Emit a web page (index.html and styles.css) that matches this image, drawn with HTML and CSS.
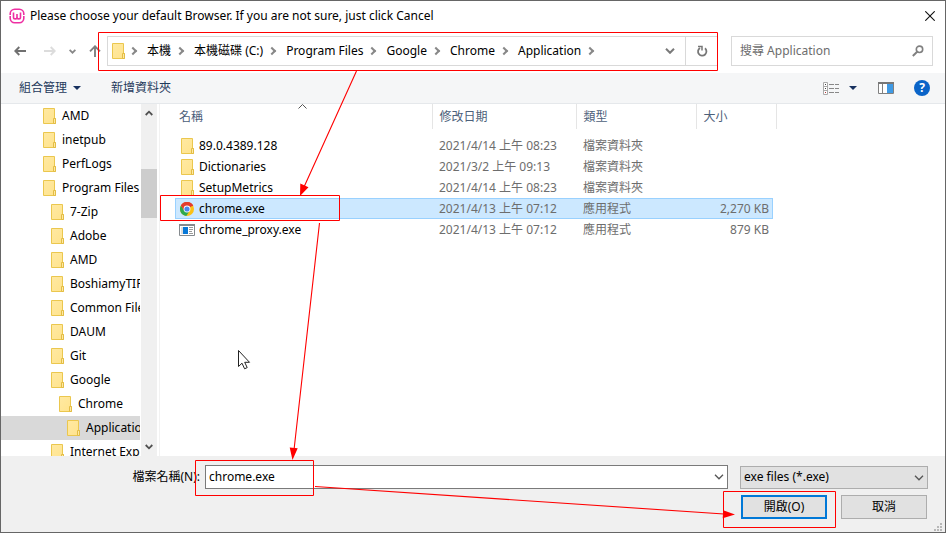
FILE: index.html
```html
<!DOCTYPE html>
<html lang="zh-Hant">
<head>
<meta charset="utf-8">
<title>Please choose your default Browser</title>
<link rel="stylesheet" href="styles.css">
</head>
<body>
<svg class="defs" aria-hidden="true">
  <defs>
    <linearGradient id="paper" x1="0" y1="0" x2="1" y2="1"><stop offset="0" stop-color="#ffe9a2"/><stop offset="1" stop-color="#ffe38c"/></linearGradient>
    <symbol id="folder" viewBox="0 0 14 16"><path d="M.5.5h11v10h1v5H.5z" fill="url(#paper)" stroke="#ebc74e"/><path d="M10.500 15.500v-5h2v5z" fill="#ffe9a2" stroke="#e3bd45"/></symbol>
    <symbol id="down" viewBox="0 0 10 6"><path d="M1 .8l4 4 4-4" fill="none" stroke="currentColor" stroke-width="1.300"/></symbol>
    <symbol id="tri" viewBox="0 0 8 4"><path d="M0 0h8L4 4z" fill="#17315f"/></symbol>
  </defs>
</svg>
<main class="dialog">
  <header class="title">
    <svg class="logo" viewBox="0 0 16 16"><rect x="1.200" y="1.200" width="13.600" height="13.600" rx="4.500" fill="#fff" stroke="#ee2fa2" stroke-width="1.600"/><path d="M4.500 4.500v4.700c0 1.200.7 1.700 1.700 1.700S8 10.300 8 9.200V6v3.200c0 1.100.8 1.700 1.800 1.700s1.700-.5 1.700-1.700V4.500" fill="none" stroke="#ee2fa2" stroke-width="1.600"/><path d="M0 7.500h2M14 7.500h2" stroke="#fff"/></svg>
    <h1>Please choose your default Browser. If you are not sure, just click Cancel</h1>
    <button class="plain close" aria-label="關閉"><svg width="10" height="10" viewBox="0 0 10 10"><path d="M.3.3l9.400 9.400M9.700.3L.3 9.700" stroke="#111" stroke-width="1.100"/></svg></button>
  </header>

  <nav class="nav">
    <div class="history">
      <button class="plain" aria-label="上一頁"><svg width="12" height="10" viewBox="0 0 12 10"><path d="M12 5H1.300M5.300 1l-4 4 4 4" fill="none" stroke="#707070" stroke-width="1.900"/></svg></button>
      <button class="plain" aria-label="下一頁"><svg width="12" height="10" viewBox="0 0 12 10"><path d="M0 5h10.700M6.700 1l4 4-4 4" fill="none" stroke="#dcdcdc" stroke-width="1.900"/></svg></button>
      <button class="plain" aria-label="最近的位置"><svg width="7" height="5" viewBox="0 0 7 5"><path d="M.6.8l2.900 2.900L6.400.8" fill="none" stroke="#888" stroke-width="1.800"/></svg></button>
      <button class="plain" aria-label="上一層"><svg width="12" height="12" viewBox="0 0 12 12"><path d="M6 12V1.300M1 6.300l5-5 5 5" fill="none" stroke="#808080" stroke-width="1.900"/></svg></button>
    </div>
    <div class="address">
      <svg class="folder"><use href="#folder"/></svg>
      <ol>
        <li><a href="#">本機</a></li><li><a href="#">本機磁碟 (C:)</a></li><li><a href="#">Program Files</a></li><li><a href="#">Google</a></li><li><a href="#">Chrome</a></li><li><a href="#">Application</a></li>
      </ol>
      <button class="plain history-menu" aria-label="先前的位置"><svg width="10" height="6" viewBox="0 0 10 6"><path d="M1 .8l4 4 4-4" fill="none" stroke="#7a7a7a" stroke-width="2"/></svg></button>
      <button class="plain refresh" aria-label="重新整理"><svg width="12" height="12" viewBox="0 0 12 12"><path d="M9 3.300A4.200 4.200 0 1 1 4 2.900" fill="none" stroke="#777" stroke-width="1.800"/><path d="M2 1.500h4v4" fill="none" stroke="#777" stroke-width="1.500"/></svg></button>
    </div>
    <div class="search">
      <input type="search" aria-label="搜尋" placeholder="搜尋 Application">
      <svg width="12" height="12" viewBox="0 0 12 12"><circle cx="7.500" cy="4.300" r="3.200" fill="none" stroke="#808080" stroke-width="1.600"/><path d="M5.200 6.700L.8 11" stroke="#808080" stroke-width="2"/></svg>
    </div>
  </nav>

  <div class="toolbar">
    <button class="plain">組合管理 <svg class="tri"><use href="#tri"/></svg></button>
    <button class="plain new-folder">新增資料夾</button>
    <button class="plain view" aria-label="檢視"><svg width="17" height="13" viewBox="0 0 17 13"><path d="M.5.5h4v12h-4zM.5 4.500h4M.5 8.500h4" fill="#fff" stroke="#aaa"/><path d="M2 2.500h1M2 6.500h1" stroke="#444"/><path d="M2 10.500h1" stroke="#b33"/><path d="M6 2.500h5M12 2.500h4M6 6.500h5M12 6.500h4M6 10.500h5M12 10.500h4" stroke="#888"/></svg><svg class="tri"><use href="#tri"/></svg></button>
    <button class="plain pane" aria-label="預覽窗格"><svg width="16" height="12" viewBox="0 0 16 12"><path d="M.5.5h15v11H.5zM4.500 1v10" fill="#fff" stroke="#808080"/><path d="M0 1h16" stroke="#777" stroke-width="2"/><path d="M9 2h6v9H9z" fill="#3f9ae5"/></svg></button>
    <button class="plain help" aria-label="說明">?</button>
  </div>

  <div class="content">
    <ul class="tree">
      <li><svg class="folder"><use href="#folder"/></svg>AMD</li>
      <li><svg class="folder"><use href="#folder"/></svg>inetpub</li>
      <li><svg class="folder"><use href="#folder"/></svg>PerfLogs</li>
      <li><svg class="folder"><use href="#folder"/></svg>Program Files</li>
      <li class="l2"><svg class="folder"><use href="#folder"/></svg>7-Zip</li>
      <li class="l2"><svg class="folder"><use href="#folder"/></svg>Adobe</li>
      <li class="l2"><svg class="folder"><use href="#folder"/></svg>AMD</li>
      <li class="l2"><svg class="folder"><use href="#folder"/></svg>BoshiamyTIP</li>
      <li class="l2"><svg class="folder"><use href="#folder"/></svg>Common Files</li>
      <li class="l2"><svg class="folder"><use href="#folder"/></svg>DAUM</li>
      <li class="l2"><svg class="folder"><use href="#folder"/></svg>Git</li>
      <li class="l2"><svg class="folder"><use href="#folder"/></svg>Google</li>
      <li class="l3"><svg class="folder"><use href="#folder"/></svg>Chrome</li>
      <li class="l4 current"><svg class="folder"><use href="#folder"/></svg>Application</li>
      <li class="l2"><svg class="folder"><use href="#folder"/></svg>Internet Explorer</li>
    </ul>
    <div class="scroll">
      <svg width="8" height="6" viewBox="0 0 8 6"><path d="M.7 5L4 1.700 7.300 5" fill="none" stroke="#505050" stroke-width="1.800"/></svg>
      <div class="track"><div class="thumb"></div></div>
      <svg width="8" height="6" viewBox="0 0 8 6"><path d="M.7 1L4 4.300 7.300 1" fill="none" stroke="#505050" stroke-width="1.800"/></svg>
    </div>
    <div class="files">
      <table>
        <colgroup><col><col class="date"><col class="type"><col class="size"></colgroup>
        <thead><tr><th>名稱<svg class="sort" viewBox="0 0 9 5"><path d="M.5 4.500l4-4 4 4" fill="none" stroke="#555"/></svg></th><th>修改日期</th><th>類型</th><th>大小</th></tr></thead>
        <tbody>
          <tr><td><span class="name"><svg class="folder"><use href="#folder"/></svg>89.0.4389.128</span></td><td>2021/4/14 上午 08:23</td><td>檔案資料夾</td><td></td></tr>
          <tr><td><span class="name"><svg class="folder"><use href="#folder"/></svg>Dictionaries</span></td><td>2021/3/2 上午 09:13</td><td>檔案資料夾</td><td></td></tr>
          <tr><td><span class="name"><svg class="folder"><use href="#folder"/></svg>SetupMetrics</span></td><td>2021/4/14 上午 08:23</td><td>檔案資料夾</td><td></td></tr>
          <tr class="selected"><td><span class="name"><svg class="app" viewBox="0 0 16 16"><circle cx="8" cy="8" r="7" fill="#fbc116"/><path d="M8 8L1.940 4.500A7 7 0 0 1 14.060 4.500z" fill="#e33b2e"/><path d="M1.940 4.500A7 7 0 0 0 7.300 14.970L10.800 9.600 8 8 5.200 9.600z" fill="#2da94f"/><path d="M1.940 4.500L5.200 9.800 8 5h6.300A7 7 0 0 0 1.940 4.500z" fill="#e33b2e"/><circle cx="8" cy="8" r="3.400" fill="#fff"/><circle cx="8" cy="8" r="2.600" fill="#4a87ed"/></svg>chrome.exe</span></td><td>2021/4/13 上午 07:12</td><td>應用程式</td><td>2,270 KB</td></tr>
          <tr><td><span class="name"><svg class="app" viewBox="0 0 16 16"><path d="M.5 2.500h15v11H.5z" fill="#fff" stroke="#858a8e"/><path d="M0 3h16" stroke="#858a8e" stroke-width="2"/><path d="M2 5h2v7H2z" fill="#ddd"/><path d="M4 5h5v7H4z" fill="#0878d7"/><path d="M10 5.500h4M10 7.500h4M10 9.500h3M10 11.500h4" stroke="#999"/></svg>chrome_proxy.exe</span></td><td>2021/4/13 上午 07:12</td><td>應用程式</td><td>879 KB</td></tr>
        </tbody>
      </table>
    </div>
  </div>

  <form class="footer">
    <label for="filename">檔案名稱(N):</label>
    <div class="combo"><input id="filename" type="text" value="chrome.exe"><button type="button" class="plain" aria-label="檔案清單"><svg class="chev"><use href="#down"/></svg></button></div>
    <div class="filter"><select aria-label="檔案類型"><option>exe files (*.exe)</option></select><svg class="chev"><use href="#down"/></svg></div>
    <div class="actions"><button type="button" class="btn primary">開啟(O)</button><button type="button" class="btn">取消</button></div>
  </form>
  <svg class="grip" viewBox="0 0 8 8"><path d="M6 0h2v2H6zM3 3h2v2H3zM6 3h2v2H6zM0 6h2v2H0zM3 6h2v2H3zM6 6h2v2H6z" fill="#b8b8b8"/></svg>
</main>

<svg class="marks" width="946" height="533" viewBox="0 0 946 533" aria-hidden="true">
  <g fill="none" stroke="#f00">
    <path d="M98.500 32.500h619v38h-619zM160.500 195.500h179v25h-179zM195.500 460.500h118v35h-118zM723.500 491.500h112v36h-112z"/>
    <path d="M356.500 71L304 187M319.500 223L294 450M315 486.500L724 514" stroke-width="1.100"/>
  </g>
  <path d="M300 196l.3-12.500 8.200 3.800zM292.500 460l-2.800-12.500 8 .8zM735 514.500l-12.300 3.800.5-8z" fill="#f00"/>
  <path d="M238.500 350.500v16l3.500-3.300 2.600 5.600 2.600-1.200-2.500-5.300h4.800z" fill="#fff" stroke="#222"/>
</svg>
</body>
</html>
```

FILE: styles.css
```css
* { box-sizing: border-box; }

body {
  margin: 0;
  font-family: "Noto Sans", "Noto Sans CJK TC", sans-serif;
  font-size: 12px;
  line-height: 20px;
  color: #000;
}

svg { display: block; flex: none; }
.defs { position: absolute; width: 0; height: 0; }

button, input, select { font: inherit; color: inherit; }
.plain { border: 0; padding: 0; background: none; display: flex; align-items: center; justify-content: center; }
.folder { width: 14px; height: 16px; }
.app { width: 16px; height: 16px; }
.chev { width: 10px; height: 6px; color: #555; }
.tri { width: 8px; height: 4px; }

.dialog {
  position: relative;
  display: flex;
  flex-direction: column;
  height: 100vh;
  border: 1px solid #666;
  background: #fff;
}

.title { display: flex; align-items: center; height: 30px; padding: 0 10px 0 8px; gap: 5px; }
.title h1 { flex: 1; margin: 0; font-size: 12px; font-weight: 400; }
.logo { width: 16px; height: 16px; }

.nav { display: flex; height: 42px; padding: 5px 12px 7px 13px; }
.history { display: flex; align-items: center; gap: 13px; width: 93px; }
.history button:first-child { margin-right: 5px; }
.address { flex: 1; display: flex; align-items: center; border: 1px solid #d9d9d9; padding-left: 4px; }
.address .folder { margin-right: -2px; }
.address ol { flex: 1; display: flex; margin: 0; padding: 0; list-style: none; }
.address li { display: flex; align-items: center; }
.address li::before, .address li:last-child::after {
  content: "";
  width: 4px;
  height: 4px;
  border: solid #888;
  border-width: 2px 2px 0 0;
  transform: rotate(45deg);
  margin: 0 11px 0 6px;
}
.address a { color: inherit; text-decoration: none; }
.history-menu { width: 30px; height: 100%; }
.refresh { width: 32px; height: 100%; border-left: 1px solid #d9d9d9; }
.search { display: flex; align-items: center; width: 202px; margin-left: 13px; padding: 0 8px; border: 1px solid #d9d9d9; }
.search input { flex: 1; min-width: 0; border: 0; padding: 0; background: none; outline: 0; }
.search input::placeholder { color: #6d6d6d; opacity: 1; }

.toolbar {
  display: flex;
  align-items: center;
  height: 31px;
  padding: 0 15px 0 18px;
  background: #f5f6f7;
  border-bottom: 1px solid #e5e8eb;
  color: #1e395b;
}
.toolbar .plain { gap: 6px; }
.toolbar .new-folder { margin-left: 30px; }
.toolbar .view { margin-left: auto; gap: 9px; }
.toolbar .pane { margin-left: 21px; }
.toolbar .help {
  width: 16px;
  height: 16px;
  margin-left: 20px;
  border-radius: 50%;
  background: #0a64c8;
  color: #fff;
  font-weight: 700;
}

.content { flex: 1; min-height: 0; display: flex; }
.tree { width: 139px; margin: 0; padding: 0; list-style: none; overflow: hidden; }
.tree li { display: flex; align-items: center; gap: 5px; height: 24px; padding-left: 42px; white-space: nowrap; }
.tree .l2 { padding-left: 50px; }
.tree .l3 { padding-left: 58px; }
.tree .l4 { padding-left: 66px; }
.tree .current { background: #d9d9d9; }
.scroll { display: flex; flex-direction: column; align-items: center; width: 16px; margin-left: 1px; padding: 6px 0; background: #f0f0f0; }
.track { flex: 1; align-self: stretch; display: flex; flex-direction: column; }
.thumb { height: 49px; margin-top: 53px; background: #cdcdcd; }
.files { flex: 1; margin-left: 2px; padding-left: 15px; border-left: 1px solid #f2f2f2; }

table { width: 598px; border-collapse: collapse; table-layout: fixed; color: #6d6d6d; }
.date { width: 144px; }
.type { width: 120px; }
.size { width: 77px; }
th { position: relative; height: 25px; padding: 0 7px; font-weight: 400; text-align: left; color: #4c607a; border-left: 1px solid #e5e5e5; }
th:first-child { padding-left: 4px; border-left: 0; }
th:last-child::after { content: ""; position: absolute; top: 0; bottom: 0; right: -4px; border-right: 1px solid #e5e5e5; }
.sort { position: absolute; top: 0; left: 123px; width: 9px; height: 5px; }
thead::after { content: ""; display: block; height: 6px; }
td { height: 21px; padding: 0 4px 0 7px; white-space: nowrap; }
td:first-child { padding-left: 4px; color: #000; }
td:last-child { text-align: right; }
.name { display: flex; align-items: center; gap: 4px; }
.name .folder { margin: 0 0 0 2px; }
.selected { background: #cce8ff; outline: 1px solid #99d1ff; outline-offset: -1px; }

.footer {
  display: grid;
  grid-template-columns: 199px 1fr 188px;
  align-items: center;
  row-gap: 6px;
  height: 76px;
  padding: 9px 17px 13px 0;
  background: #f0f0f0;
}
.footer label { text-align: right; }
.combo { display: flex; height: 24px; margin: 0 12px 0 5px; border: 1px solid #7a7a7a; background: #fff; }
.combo input { flex: 1; min-width: 0; border: 0; padding: 0 3px; background: none; outline: 0; }
.combo .plain { width: 17px; }
.filter { position: relative; }
.filter select { display: block; width: 100%; height: 23px; padding: 0 3px; border: 1px solid #adadad; border-radius: 0; background: #e1e1e1; appearance: none; }
.filter .chev { position: absolute; right: 4px; top: 9px; pointer-events: none; }
.actions { grid-column: 1 / -1; display: flex; justify-content: flex-end; gap: 14px; padding-right: 1px; }
.btn { width: 86px; height: 24px; padding: 0; border: 1px solid #adadad; background: #e1e1e1; }
.primary { border: 2px solid #0078d7; }
.grip { position: absolute; right: 3px; bottom: 1px; width: 8px; height: 8px; }

.marks { position: absolute; top: 0; left: 0; pointer-events: none; }
```
